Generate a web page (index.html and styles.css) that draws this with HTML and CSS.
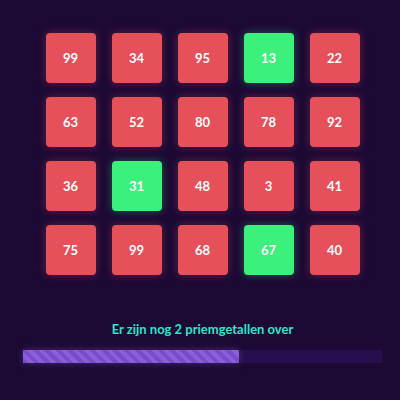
FILE: index.html
```html
<!DOCTYPE html>
<html>
<head>
<meta charset="utf-8">
<link rel="stylesheet" href="styles.css">
</head>
<body>
<div class="page">
  <div class="grid">
    <div class="tile">99</div><div class="tile">34</div><div class="tile">95</div><div class="tile prime">13</div><div class="tile">22</div>
    <div class="tile">63</div><div class="tile">52</div><div class="tile">80</div><div class="tile">78</div><div class="tile">92</div>
    <div class="tile">36</div><div class="tile prime">31</div><div class="tile">48</div><div class="tile">3</div><div class="tile">41</div>
    <div class="tile">75</div><div class="tile">99</div><div class="tile">68</div><div class="tile prime">67</div><div class="tile">40</div>
  </div>
  <div class="status">Er zijn nog 2 priemgetallen over</div>
  <div class="track"><div class="fill" style="width:60.2%"></div></div>
</div>
</body>
</html>
```
FILE: styles.css
```css
html, body {
  margin: 0;
  padding: 0;
  background: #1c0a35;
  width: 400px;
  height: 400px;
  overflow: hidden;
}
.page {
  display: flex;
  flex-direction: column;
  align-items: center;
  padding: 33px 18px 0 23px;
  font-family: Lato, "Open Sans", sans-serif;
}
.grid {
  display: grid;
  grid-template-columns: repeat(5, 50px);
  grid-auto-rows: 50px;
  column-gap: 16px;
  row-gap: 14px;
}
.tile {
  background: #e6505a;
  border-radius: 4px;
  color: #fff;
  font-weight: 700;
  font-size: 13px;
  display: flex;
  align-items: center;
  justify-content: center;
  box-shadow: 0 0 8px rgba(230, 80, 90, 0.35);
}
.tile.prime {
  background: #3cf07c;
  box-shadow: 0 0 8px rgba(60, 240, 124, 0.35);
}
.status {
  margin-top: 46px;
  color: #2ee3c9;
  font-weight: 700;
  font-size: 13px;
  line-height: 16px;
}
.track {
  margin-top: 13px;
  align-self: stretch;
  height: 13px;
  background: #260f4c;
}
.fill {
  height: 100%;
  background: repeating-linear-gradient(45deg, #7a4bcc 0 4px, #8c5fd8 4px 8px);
  box-shadow: 0 0 6px rgba(140, 95, 216, 0.4);
}
```
